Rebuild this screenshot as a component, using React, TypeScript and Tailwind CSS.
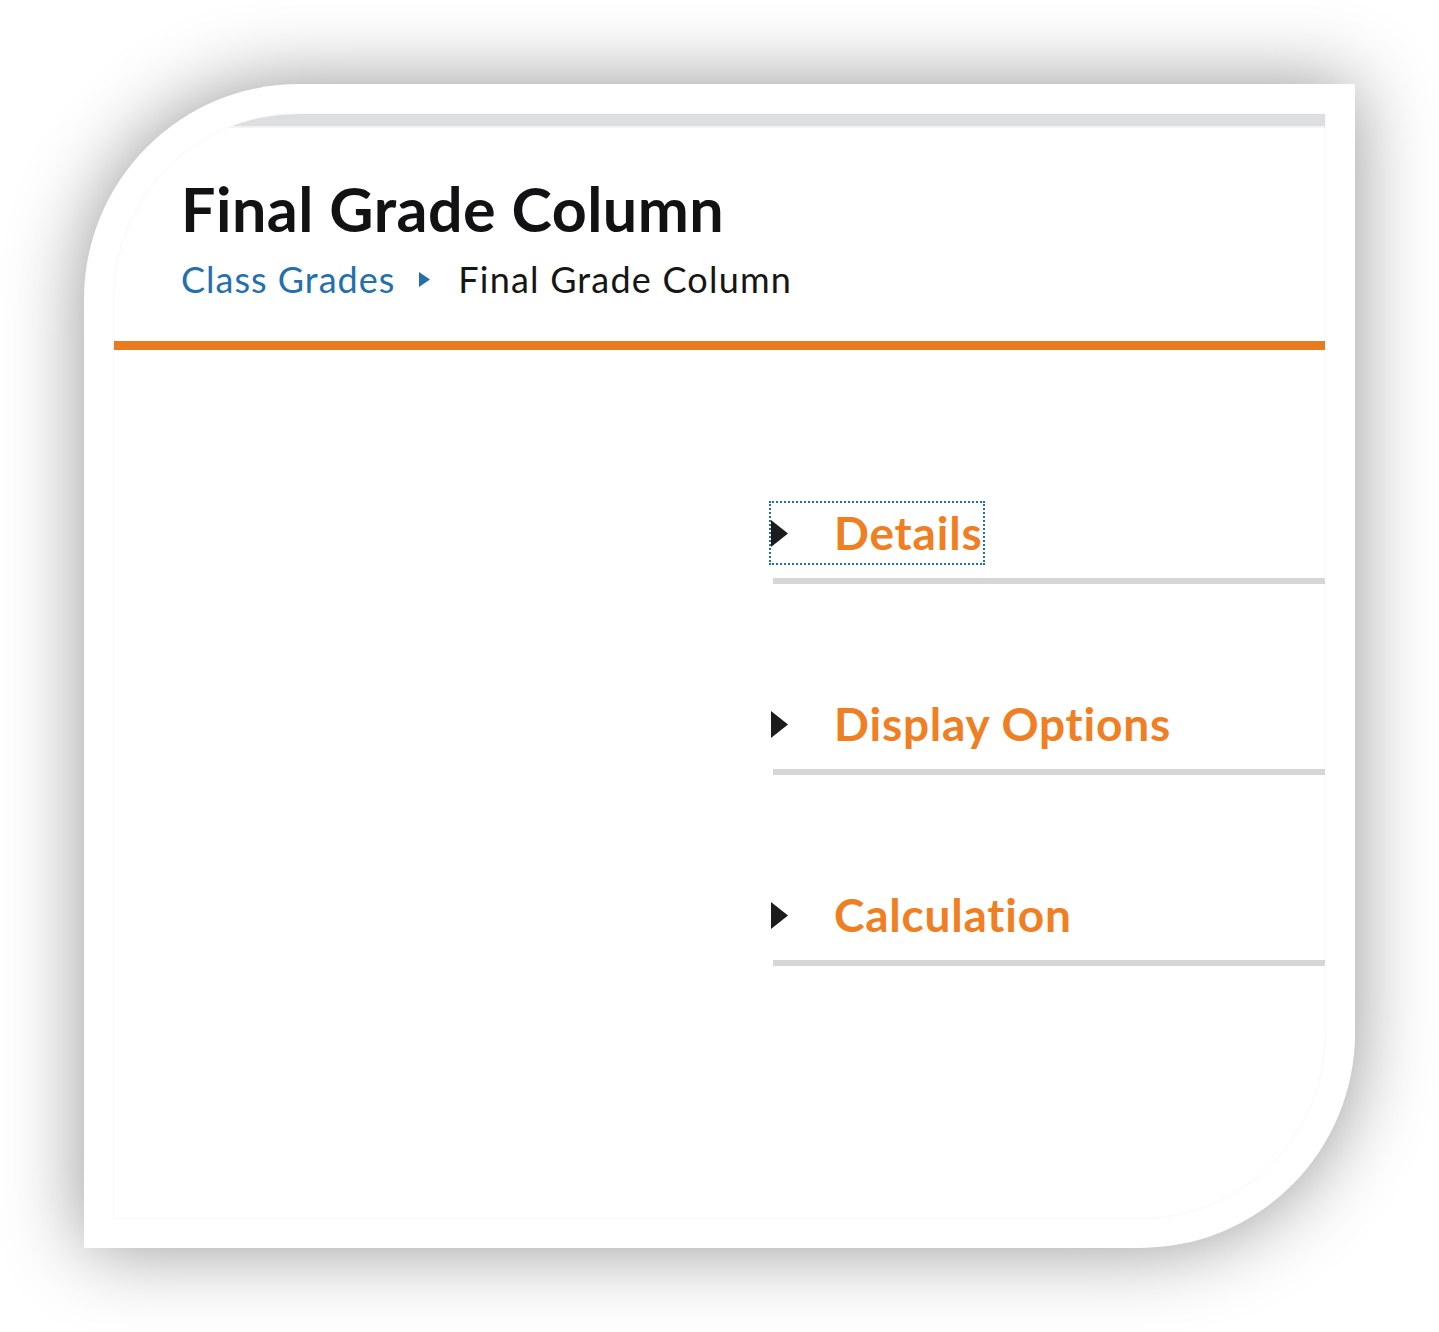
import React from "react";

function Caret({ className }: { className?: string }) {
  return (
    <svg width="17" height="27" viewBox="0 0 17 27" className={className}>
      <polygon points="0,0 17,13.5 0,27" fill="currentColor" />
    </svg>
  );
}

function Section({ title, focused }: { title: string; focused?: boolean }) {
  return (
    <div className="flex flex-col">
      <button
        className={`flex h-[64px] w-fit items-center border-2 border-dotted pr-[1px] ${
          focused ? "border-[#1f6fb2]" : "border-transparent"
        }`}
      >
        <Caret className="text-[#1c1c1c]" />
        <span className="ml-[46px] text-[46px] leading-none font-bold tracking-[0.8px] text-[#ef7f22]">
          {title}
        </span>
      </button>
      <div className="mt-[13px] ml-[4px] h-[6px] bg-[#d6d6d6]" />
    </div>
  );
}

export default function App() {
  return (
    <div
      className="min-h-[1332px] w-full bg-white pt-[84px] pl-[84px]"
      style={{ fontFamily: "Lato, 'Open Sans', sans-serif" }}
    >
      <div className="h-[1164px] w-[1271px] rounded-tl-[215px] rounded-br-[215px] bg-white p-[29px] shadow-[0_0_80px_rgba(0,0,0,0.42)]">
        <div className="flex h-full w-full flex-col overflow-hidden rounded-tl-[185px] rounded-br-[185px] border border-[#f8f8f8]">
          <div className="h-[12px] shrink-0 bg-[#dcdedf]" />
          <div className="h-[2px] shrink-0 bg-[#f2f3f3]" />

          <div className="pl-[67px]">
            <h1 className="mt-[50px] text-[61px] leading-none font-bold tracking-[0.5px] text-[#121214]">
              Final Grade Column
            </h1>
            <div className="mt-[22px] flex h-[36px] items-center text-[36px] leading-none tracking-[1px]">
              <a className="text-[#2470ad]">Class Grades</a>
              <svg width="11" height="15" viewBox="0 0 11 15" className="ml-[24px] text-[#2470ad]">
                <polygon points="0,0 11,7.5 0,15" fill="currentColor" />
              </svg>
              <span className="ml-[28px] tracking-[1.2px] text-[#161616]">Final Grade Column</span>
            </div>
          </div>

          <div className="mt-[44px] h-[9px] shrink-0 bg-[#e97a1f]" />

          <div className="mt-[151px] flex flex-col gap-[108px] pl-[655px]">
            <Section title="Details" focused />
            <Section title="Display Options" />
            <Section title="Calculation" />
          </div>
        </div>
      </div>
    </div>
  );
}
